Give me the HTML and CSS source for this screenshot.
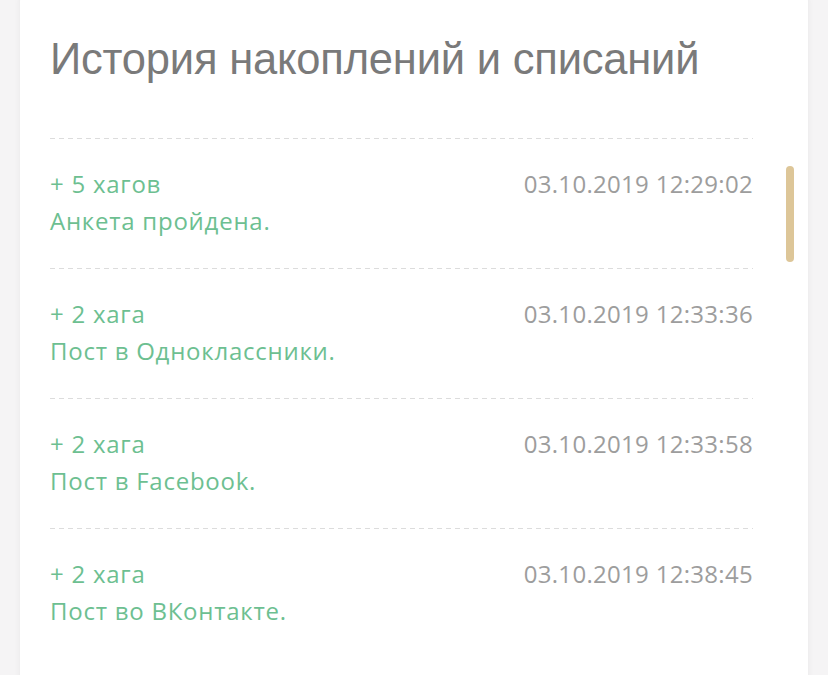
FILE: index.html
```html
<!DOCTYPE html>
<html lang="ru">
<head>
<meta charset="utf-8">
<link rel="stylesheet" href="styles.css">
</head>
<body>
<div class="card">
  <h1 class="title">История накоплений и списаний</h1>
  <ul class="list">
    <li class="item">
      <div class="row"><span class="amount">+ 5 хагов</span><span class="date">03.10.2019 12:29:02</span></div>
      <div class="desc">Анкета пройдена.</div>
    </li>
    <li class="item">
      <div class="row"><span class="amount">+ 2 хага</span><span class="date">03.10.2019 12:33:36</span></div>
      <div class="desc">Пост в Одноклассники.</div>
    </li>
    <li class="item">
      <div class="row"><span class="amount">+ 2 хага</span><span class="date">03.10.2019 12:33:58</span></div>
      <div class="desc">Пост в Facebook.</div>
    </li>
    <li class="item">
      <div class="row"><span class="amount">+ 2 хага</span><span class="date">03.10.2019 12:38:45</span></div>
      <div class="desc">Пост во ВКонтакте.</div>
    </li>
  </ul>
  <div class="scrollbar"></div>
</div>
</body>
</html>
```
FILE: styles.css
```css
html, body {
  margin: 0;
  padding: 0;
  background: #f5f4f5;
  overflow: hidden;
  height: 675px;
}
.card {
  position: relative;
  margin: -12px 0 0 20px;
  width: 788px;
  box-sizing: border-box;
  padding: 46px 55px 40px 30px;
  background: #fff;
  border-radius: 14px;
  box-shadow: 0 0 6px rgba(0,0,0,0.06);
}
.title {
  margin: 0 0 54px 0;
  font-family: "Liberation Sans", Arial, sans-serif;
  font-weight: 400;
  font-size: 43.5px;
  line-height: 50px;
  color: #7a7a7a;
  letter-spacing: -0.2px;
}
.list {
  list-style: none;
  margin: 0;
  padding: 0;
}
.item {
  height: 130px;
  box-sizing: border-box;
  padding-top: 27px;
  background-image: linear-gradient(to right, #dcdcdc 60%, transparent 60%);
  background-size: 9px 1px;
  background-repeat: repeat-x;
  background-position: 0 0;
  font-family: "Open Sans", Lato, sans-serif;
  font-size: 24px;
  letter-spacing: 0.75px;
  line-height: 37px;
}
.row {
  display: flex;
  justify-content: space-between;
}
.amount, .desc {
  color: #6dbf91;
}
.date {
  color: #9d9d9d;
  letter-spacing: 0.3px;
}
.scrollbar {
  position: absolute;
  left: 766px;
  top: 178px;
  width: 8px;
  height: 96px;
  border-radius: 4px;
  background: #ddc698;
}
```
